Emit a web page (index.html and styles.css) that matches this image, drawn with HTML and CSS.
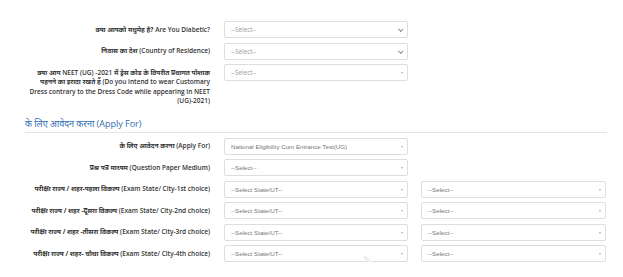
FILE: index.html
```html
<!DOCTYPE html>
<html lang="hi">
  <head>
    <meta charset="UTF-8" />
    <meta name="viewport" content="width=device-width, initial-scale=1.0" />
    <title>Application Form</title>
    <link rel="stylesheet" href="styles.css">
  </head>
  <body>
    <div class="form-page">
      <section class="form-block">
        <div class="form-row">
          <label class="form-label"><span class="hi">क्या आपको मधुमेह है?</span> Are You Diabetic?</label>
          <div class="select-box chevron">--Select--</div>
        </div>
        <div class="form-row">
          <label class="form-label"><span class="hi">निवास का देश</span> (Country of Residence)</label>
          <div class="select-box chevron">--Select--</div>
        </div>
        <div class="form-row">
          <label class="form-label"><span class="hi">क्या आप</span> NEET (UG) -2021 <span class="hi">में ड्रेस कोड के विपरीत प्रथागत पोशाक</span><br><span class="hi">पहनने का इरादा रखते हैं</span> (Do you intend to wear Customary<br>Dress contrary to the Dress Code while appearing in NEET<br>(UG)-2021)</label>
          <div class="select-box caret">--Select--</div>
        </div>
      </section>

      <h3 class="section-title"><span class="hi">के लिए आवेदन करना</span> (Apply For)</h3>

      <section class="form-block">
        <div class="form-row">
          <label class="form-label"><span class="hi">के लिए आवेदन करना</span> (Apply For)</label>
          <div class="select-box caret plain">National Eligibility Cum Entrance Test(UG)</div>
        </div>
        <div class="form-row">
          <label class="form-label"><span class="hi">प्रश्न पत्र माध्यम</span> (Question Paper Medium)</label>
          <div class="select-box caret plain">--Select--</div>
        </div>
        <div class="form-row">
          <label class="form-label"><span class="hi">परीक्षा राज्य / शहर-पहला विकल्प</span> (Exam State/ City-1st choice)</label>
          <div class="select-box caret plain">--Select State/UT--</div>
          <div class="select-box caret plain">--Select--</div>
        </div>
        <div class="form-row">
          <label class="form-label"><span class="hi">परीक्षा राज्य / शहर -दूसरा विकल्प</span> (Exam State/ City-2nd choice)</label>
          <div class="select-box caret plain">--Select State/UT--</div>
          <div class="select-box caret plain">--Select--</div>
        </div>
        <div class="form-row">
          <label class="form-label"><span class="hi">परीक्षा राज्य / शहर -तीसरा विकल्प</span> (Exam State/ City-3rd choice)</label>
          <div class="select-box caret plain">--Select State/UT--</div>
          <div class="select-box caret plain">--Select--</div>
        </div>
        <div class="form-row">
          <label class="form-label"><span class="hi">परीक्षा राज्य / शहर- चौथा विकल्प</span> (Exam State/ City-4th choice)</label>
          <div class="select-box caret plain">--Select State/UT--</div>
          <div class="select-box caret plain">--Select--</div>
        </div>
      </section>

      <svg class="watermark" width="70" height="30" viewBox="0 0 70 30">
        <path d="M4 22 Q10 14 16 22 T 20 30" fill="none" stroke="#eeeeee" stroke-width="3"/>
        <path d="M34 6 L48 20" fill="none" stroke="#efefef" stroke-width="3"/>
      </svg>
    </div>
  </body>
</html>
```

FILE: styles.css
```css
body {
  margin: 0;
  background: #fff;
  font-family: "Open Sans", "Noto Sans", "Noto Sans Devanagari", "Lohit Devanagari", "FreeSans", sans-serif;
  color: #333;
}

.form-page {
  position: relative;
  padding: 21px 16px 0 25px;
}

/* Devanagari runs */
.hi {
  font-size: 6.6px;
  font-weight: 700;
}

/* rows */
.form-block {
  display: flex;
  flex-direction: column;
  gap: 4.5px;
}
.form-row {
  display: grid;
  grid-template-columns: 186px 184px 185px;
  column-gap: 13px;
  align-items: start;
}
.form-label {
  padding: 3.5px 1px 0 0;
  text-align: right;
  font-size: 6.5px;
  line-height: 9.5px;
  font-weight: 600;
  color: #333;
  white-space: nowrap;
}

/* fake selects */
.select-box {
  position: relative;
  box-sizing: border-box;
  height: 17px;
  padding: 0 14px 0 6px;
  border: 1px solid #dedede;
  border-radius: 2px;
  background: #fff;
  font-size: 6.3px;
  line-height: 15px;
  color: #999;
  white-space: nowrap;
  overflow: hidden;
}
.select-box.plain {
  font-family: "Liberation Sans", Arial, sans-serif;
  font-size: 6.2px;
  color: #777;
}
.select-box.chevron::after {
  content: "";
  position: absolute;
  right: 5px;
  top: 5px;
  width: 2.5px;
  height: 2.5px;
  border-right: 1px solid #888;
  border-bottom: 1px solid #888;
  transform: rotate(45deg);
}
.select-box.caret::after {
  content: "";
  position: absolute;
  right: 4px;
  top: 7px;
  border-left: 1.5px solid transparent;
  border-right: 1.5px solid transparent;
  border-top: 2px solid #aaa;
}

/* heading */
.section-title {
  margin: 12.5px 0 5px;
  padding-bottom: 1.5px;
  border-bottom: 1px solid #e6e6e6;
  font-size: 9px;
  line-height: 12px;
  font-weight: 400;
  color: #2f6db3;
}
.section-title .hi {
  font-size: 9px;
  font-weight: 400;
}

.watermark {
  position: absolute;
  left: 330px;
  top: 250px;
}
```
